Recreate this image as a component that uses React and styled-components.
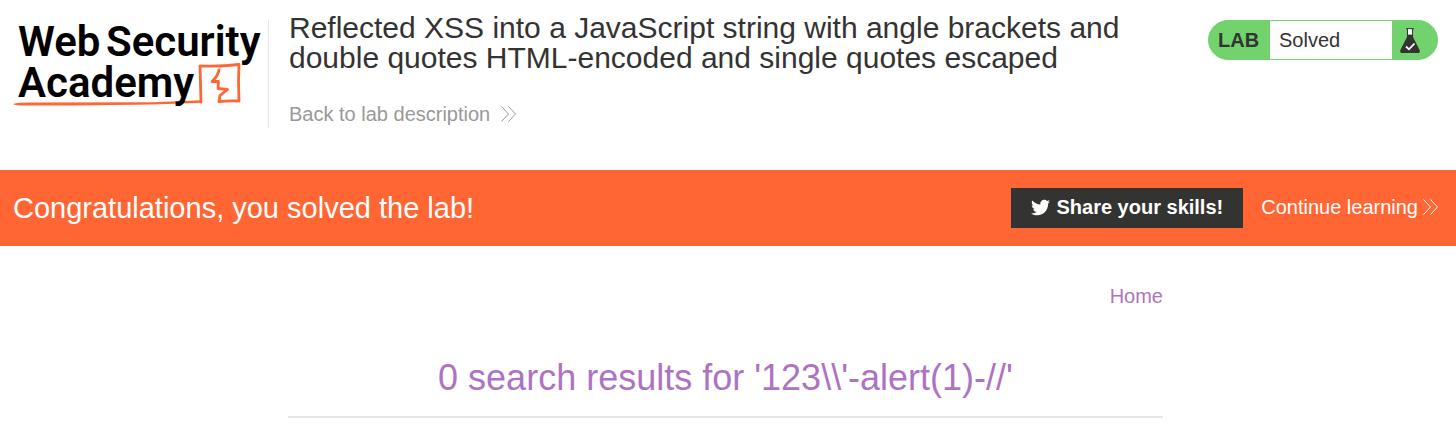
import React from "react";
import styled, { createGlobalStyle } from "styled-components";
import { FaTwitter } from "react-icons/fa";

const colors = {
  orange: "#ff6633",
  dark: "#333332",
  green: "#71d26e",
  purple: "#ad73c2",
  grey: "#999999",
  line: "#e6e6e6",
};

const GlobalStyle = createGlobalStyle`
  *, *::before, *::after { box-sizing: border-box; }
  body {
    margin: 0;
    background: #fff;
    color: ${colors.dark};
    font-family: "Liberation Sans", Arial, sans-serif;
    font-size: 20px;
    line-height: 24px;
  }
`;

const Header = styled.header`
  display: flex;
  align-items: flex-start;
  padding: 20px 18px 42px 13px;
`;

const LogoLink = styled.a`
  flex: none;
  display: block;
  width: 255px;
  height: 90px;
`;

const LogoSvg = styled.svg`
  display: block;
  overflow: visible;
  font-family: Roboto, sans-serif;
  font-size: 42px;
  font-weight: 600;
`;

const TitleBlock = styled.div`
  flex: 1;
  min-width: 0;
  min-height: 108px;
  padding: 0 80px 0 20px;
  border-left: 1px solid ${colors.line};
`;

const Title = styled.h1`
  margin: -7px 0 29px;
  font-size: 30px;
  font-weight: 400;
  line-height: 30px;
`;

const ArrowLink = styled.a`
  display: inline-flex;
  align-items: center;
  gap: ${(p) => p.$gap};
  padding-bottom: 2px;
  color: ${(p) => p.$color};
  text-decoration: none;
  white-space: nowrap;
`;

const Status = styled.div`
  flex: none;
  display: flex;
  width: 230px;
  height: 40px;
  border: 1px solid ${colors.green};
  border-radius: 20px;
  overflow: hidden;
  background: ${colors.green};
  line-height: 38px;
`;

const StatusLabel = styled.strong`
  width: 61px;
  padding-left: 9px;
`;

const StatusText = styled.span`
  flex: 1;
  padding-left: 9px;
  background: #fff;
`;

const StatusIcon = styled.span`
  display: flex;
  align-items: center;
  width: 45px;
  padding: 2px 0 0 8px;
`;

const Banner = styled.section`
  display: flex;
  align-items: center;
  justify-content: space-between;
  padding: 18px 18px 18px 13px;
  background: ${colors.orange};
  color: #fff;
`;

const BannerTitle = styled.h2`
  margin: 0;
  font-size: 29px;
  font-weight: 400;
  line-height: 40px;
`;

const BannerActions = styled.div`
  display: flex;
  align-items: center;
  gap: 18px;
`;

const ShareButton = styled.button`
  display: flex;
  align-items: center;
  gap: 6px;
  height: 40px;
  padding: 0 20px 2px;
  border: 0;
  background: ${colors.dark};
  color: #fff;
  font: inherit;
  font-weight: 700;
`;

const Main = styled.main`
  display: flex;
  flex-direction: column;
  max-width: 880px;
  margin: 0 auto;
  padding: 38px 5px 0 0;
`;

const Nav = styled.nav`
  text-align: right;
`;

const HomeLink = styled.a`
  color: ${colors.purple};
  text-decoration: none;
`;

const ResultsHeading = styled.h1`
  margin: 50px 0 0;
  padding-bottom: 18px;
  border-bottom: 2px solid ${colors.line};
  color: ${colors.purple};
  font-size: 36px;
  font-weight: 400;
  line-height: 40px;
  text-align: center;
`;

function Chevrons() {
  return (
    <svg width="15" height="16" viewBox="0 0 15 16" fill="none" stroke="currentColor" aria-hidden="true">
      <path d="M0.5 0.5 7.5 8 0.5 15.5M7.5 0.5 14.5 8 7.5 15.5" />
    </svg>
  );
}

function Flask() {
  return (
    <svg width="20" height="26" viewBox="0 0 20 26" aria-hidden="true">
      <path d="M6 .7H14M7.5 1V7M12.5 1V7" fill="none" stroke={colors.dark} strokeWidth="1" />
      <path d="M7 6.5H13V9L19.6 22Q20.5 25 18 25H2Q-.5 25 .4 22L7 9Z" fill={colors.dark} />
      <path d="M8 1.2H12V6.5H8Z" fill="#fff" />
      <path d="M6 18.5 9 21.3 14.5 15.5" fill="none" stroke="#fff" strokeWidth="1.8" />
    </svg>
  );
}

function Logo() {
  return (
    <LogoSvg width="250" height="90" viewBox="0 0 250 90" role="img" aria-label="Web Security Academy">
      <path
        d="M188 82 187 46Q207 46.8 226 44.5Q225 62 226 81Q216 80.5 206 81.5L207 75.5 214.5 69.5 205 68.5 205.5 61.5 199 61.5Q205 56 206 50"
        fill="none"
        stroke={colors.orange}
        strokeWidth="2.8"
        strokeLinecap="round"
        strokeLinejoin="round"
      />
      <path d="M0 84Q6 82.4 20 82.6L140 82.3 188 80.2 188.7 82.8 140 84.5 60 85.5 10 85.6Q3 85.5 0 84Z" fill={colors.orange} />
      <text x="5" y="36">Web</text>
      <text x="93" y="36">Security</text>
      <text x="5" y="77">Academy</text>
    </LogoSvg>
  );
}

export default function App() {
  return (
    <>
      <GlobalStyle />
      <Header>
        <LogoLink href="#academy"><Logo /></LogoLink>
        <TitleBlock>
          <Title>
            Reflected XSS into a JavaScript string with angle brackets and double quotes HTML-encoded and single quotes escaped
          </Title>
          <ArrowLink href="#lab" $gap="11px" $color={colors.grey}>
            Back to lab description <Chevrons />
          </ArrowLink>
        </TitleBlock>
        <Status>
          <StatusLabel>LAB</StatusLabel>
          <StatusText>Solved</StatusText>
          <StatusIcon><Flask /></StatusIcon>
        </Status>
      </Header>
      <Banner>
        <BannerTitle>Congratulations, you solved the lab!</BannerTitle>
        <BannerActions>
          <ShareButton type="button"><FaTwitter size={19} /> Share your skills!</ShareButton>
          <ArrowLink href="#next" $gap="5px" $color="#fff">
            Continue learning <Chevrons />
          </ArrowLink>
        </BannerActions>
      </Banner>
      <Main>
        <Nav><HomeLink href="#home">Home</HomeLink></Nav>
        <ResultsHeading>{"0 search results for '123\\\\'-alert(1)-//'"}</ResultsHeading>
      </Main>
    </>
  );
}
